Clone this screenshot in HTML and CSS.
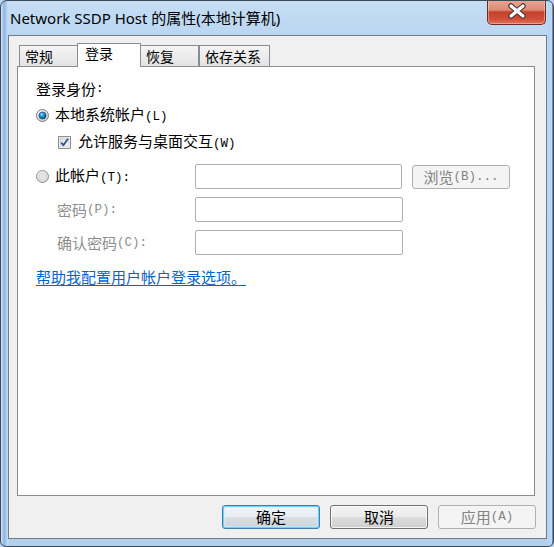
FILE: index.html
```html
<!DOCTYPE html>
<html lang="zh-CN">
<head>
<meta charset="utf-8">
<title>Network SSDP Host 的属性</title>
<link rel="stylesheet" href="styles.css">
</head>
<body>
<div class="win">
  <div class="titlebar">
    <div class="title">Network SSDP Host 的属性(本地计算机)</div>
    <div class="close">
      <svg width="59" height="25" viewBox="0 0 59 25">
        <path d="M24 7 L36 17 M36 7 L24 17" stroke="#4a3430" stroke-width="5.5" stroke-linecap="round" fill="none"/>
        <path d="M24 7 L36 17 M36 7 L24 17" stroke="#ffffff" stroke-width="3.2" stroke-linecap="round" fill="none"/>
      </svg>
    </div>
  </div>
  <div class="client">
    <div class="tabs">
      <div class="tab t1">常规</div>
      <div class="tab sel t2">登录</div>
      <div class="tab t3">恢复</div>
      <div class="tab t4">依存关系</div>
    </div>
    <div class="panel">
      <div class="row r-head">登录身份<span class="hw">:</span></div>
      <div class="row r-local">
        <svg class="radio" width="13" height="13" viewBox="0 0 13 13">
          <defs>
            <radialGradient id="rf" cx="0.35" cy="0.3" r="0.8">
              <stop offset="0" stop-color="#ffffff"/>
              <stop offset="1" stop-color="#c9c9c9"/>
            </radialGradient>
            <radialGradient id="dot" cx="0.4" cy="0.35" r="0.7">
              <stop offset="0" stop-color="#8fe6ff"/>
              <stop offset="0.45" stop-color="#1f8fd0"/>
              <stop offset="1" stop-color="#0b3e78"/>
            </radialGradient>
          </defs>
          <circle cx="6.5" cy="6.5" r="6" fill="url(#rf)" stroke="#7e7e7e"/>
          <circle cx="6.5" cy="6.5" r="3.6" fill="url(#dot)" stroke="#1a3f6a" stroke-width="0.6"/>
        </svg>
        <span>本地系统帐户<span class="hw">(L)</span></span>
      </div>
      <div class="row r-check">
        <svg class="check" width="13" height="13" viewBox="0 0 13 13">
          <defs>
            <linearGradient id="cb" x1="0" y1="0" x2="1" y2="1">
              <stop offset="0" stop-color="#dcdcdc"/>
              <stop offset="1" stop-color="#fbfbfb"/>
            </linearGradient>
          </defs>
          <rect x="0.5" y="0.5" width="12" height="12" fill="#ffffff" stroke="#8e8f8f"/>
          <rect x="2" y="2" width="9" height="9" fill="url(#cb)" stroke="#b9b9b9" stroke-width="0.6"/>
          <path d="M3.2 6.6 L5.4 9.2 L10 2.8" stroke="#2f4f9e" stroke-width="1.8" fill="none" stroke-linejoin="round"/>
        </svg>
        <span>允许服务与桌面交互<span class="hw">(W)</span></span>
      </div>
      <div class="row r-acct">
        <div class="lbl">
          <svg class="radio" width="13" height="13" viewBox="0 0 13 13">
            <defs>
              <radialGradient id="rf2" cx="0.4" cy="0.35" r="0.8">
                <stop offset="0" stop-color="#fdfdfd"/>
                <stop offset="1" stop-color="#cdcdcd"/>
              </radialGradient>
            </defs>
            <circle cx="6.5" cy="6.5" r="6" fill="url(#rf2)" stroke="#8e8f8f"/>
            <circle cx="6.5" cy="6.5" r="3.8" fill="#e4e4e4" stroke="#cfcfcf" stroke-width="0.6"/>
          </svg>
          <span>此帐户<span class="hw">(T):</span></span>
        </div>
        <div class="input i1"></div>
        <div class="btn dis browse">浏览<span class="hw">(B)...</span></div>
      </div>
      <div class="row r-pw">
        <div class="lbl sub dim">密码<span class="hw">(P):</span></div>
        <div class="input"></div>
      </div>
      <div class="row r-pw">
        <div class="lbl sub dim">确认密码<span class="hw">(C):</span></div>
        <div class="input"></div>
      </div>
      <div class="row r-link"><a class="link" href="#">帮助我配置用户帐户登录选项。</a></div>
    </div>
    <div class="buttons">
      <div class="btn def">确定</div>
      <div class="btn">取消</div>
      <div class="btn dis">应用<span class="hw">(A)</span></div>
    </div>
  </div>
</div>
</body>
</html>
```

FILE: styles.css
```css
html, body {
  margin: 0;
  padding: 0;
  background: #b8d3ee;
}

.win {
  width: 554px;
  height: 547px;
  box-sizing: border-box;
  border: 1px solid #3d4957;
  border-radius: 7px 7px 6px 6px;
  background:
    linear-gradient(90deg, #d6e8fa 0px, #8db4de 3px, #a9c9ec 5px, #c4ddf6 7px, transparent 8px),
    linear-gradient(270deg, #2e3b4a 0px, #bcdaf9 1px, #b3d4f7 5px, transparent 6px),
    linear-gradient(180deg, #c6def5 0px, #bcd7f2 30px, #b3cfec 100%);
  padding: 0 6px 0 7px;
  display: flex;
  flex-direction: column;
  overflow: hidden;
}

.titlebar {
  height: 34px;
  display: flex;
  align-items: flex-start;
  flex: none;
}

.title {
  margin-top: 7px;
  padding-left: 2px;
  font-family: "Noto Sans", "Noto Sans CJK SC", sans-serif;
  font-size: 15px;
  line-height: 20px;
  color: #000;
  white-space: nowrap;
}

.close {
  margin-left: auto;
  margin-top: -1px;
  margin-right: 1px;
  width: 59px;
  height: 25px;
  box-sizing: border-box;
  border: 1px solid #6b2a22;
  border-top: none;
  border-radius: 0 0 5px 5px;
  background: linear-gradient(180deg, #e9a795 0%, #dc8a75 42%, #c5412b 50%, #cf4f38 80%, #e0745a 100%);
  box-shadow: inset 0 0 0 1px rgba(255, 220, 210, 0.45);
  overflow: hidden;
}

.close svg {
  display: block;
  margin: -1px 0 0 -1px;
}

.client {
  flex: none;
  height: 504px;
  box-sizing: border-box;
  border: 1px solid #737b85;
  background: #f0f0f0;
  padding: 7px 10px 0 8px;
  display: flex;
  flex-direction: column;
  font-family: "Noto Sans CJK SC", "Noto Sans", sans-serif;
  font-size: 15px;
  color: #000;
}

.hw {
  font-family: "Liberation Mono", monospace;
  font-size: 12.5px;
}

/* tabs */
.tabs {
  height: 23px;
  display: flex;
  align-items: flex-end;
  padding-left: 2px;
  flex: none;
}

.tab {
  height: 21px;
  box-sizing: border-box;
  border: 1px solid #898c95;
  border-bottom: none;
  background: linear-gradient(180deg, #f4f4f4, #e4e4e4);
  font-size: 14px;
  line-height: 20px;
  padding-left: 5px;
  white-space: nowrap;
}

.t1 { width: 59px; }
.t2 { width: 64px; margin-left: -1px; }
.t3 { width: 59px; margin-left: -1px; }
.t4 { width: 71px; }

.tab.sel {
  height: 24px;
  margin-bottom: -1px;
  background: #ffffff;
  position: relative;
  z-index: 1;
  padding-left: 7px;
  line-height: 19px;
}

/* panel */
.panel {
  height: 430px;
  box-sizing: border-box;
  margin-right: 1px;
  border: 1px solid #898c95;
  background: #ffffff;
  padding: 13px 0 0 18px;
  display: flex;
  flex-direction: column;
  flex: none;
}

.row {
  display: flex;
  align-items: center;
  height: 18px;
  line-height: 18px;
  white-space: nowrap;
}

.radio, .check {
  display: block;
  flex: none;
}

.radio { margin-right: 6px; }
.check { margin-right: 7px; }

.r-local { margin-top: 8px; }
.r-check { margin-top: 9px; padding-left: 22px; }
.r-acct { margin-top: 13px; height: 25px; }
.r-pw { margin-top: 8px; height: 25px; }
.r-link { margin-top: 13px; }

.lbl {
  width: 159px;
  flex: none;
  display: flex;
  align-items: center;
}

.lbl.sub { padding-left: 21px; box-sizing: border-box; }
.dim { color: #8d8d8d; }

.input {
  width: 208px;
  height: 25px;
  box-sizing: border-box;
  border: 1px solid #adadad;
  border-radius: 2px;
  background: #ffffff;
  flex: none;
}

.input.i1 { width: 207px; }

.link {
  color: #0066cc;
  text-decoration: underline;
  text-underline-offset: 2px;
}

/* buttons */
.btn {
  width: 98px;
  height: 24px;
  box-sizing: border-box;
  border: 1px solid #707070;
  border-radius: 3px;
  background: linear-gradient(180deg, #f2f2f2 0%, #ebebeb 50%, #dddddd 51%, #cfcfcf 100%);
  box-shadow: inset 0 0 0 1px rgba(255, 255, 255, 0.75);
  display: flex;
  align-items: center;
  justify-content: center;
  line-height: 20px;
  font-size: 15px;
  color: #000;
  white-space: nowrap;
  flex: none;
}

.btn.def {
  border-color: #3c7fb1;
  box-shadow: inset 0 0 0 1px #6fd3f7, inset 0 0 0 2px rgba(200, 240, 255, 0.6);
  background: linear-gradient(180deg, #f1f5f8 0%, #e8edf1 50%, #d9dfe4 51%, #ccd4db 100%);
}

.btn.dis {
  border-color: #adb2b5;
  background: #f4f4f4;
  box-shadow: none;
  color: #838383;
}

.browse {
  margin-left: 10px;
}

.buttons {
  display: flex;
  justify-content: flex-end;
  gap: 10px;
  margin-top: 9px;
  flex: none;
}
```
